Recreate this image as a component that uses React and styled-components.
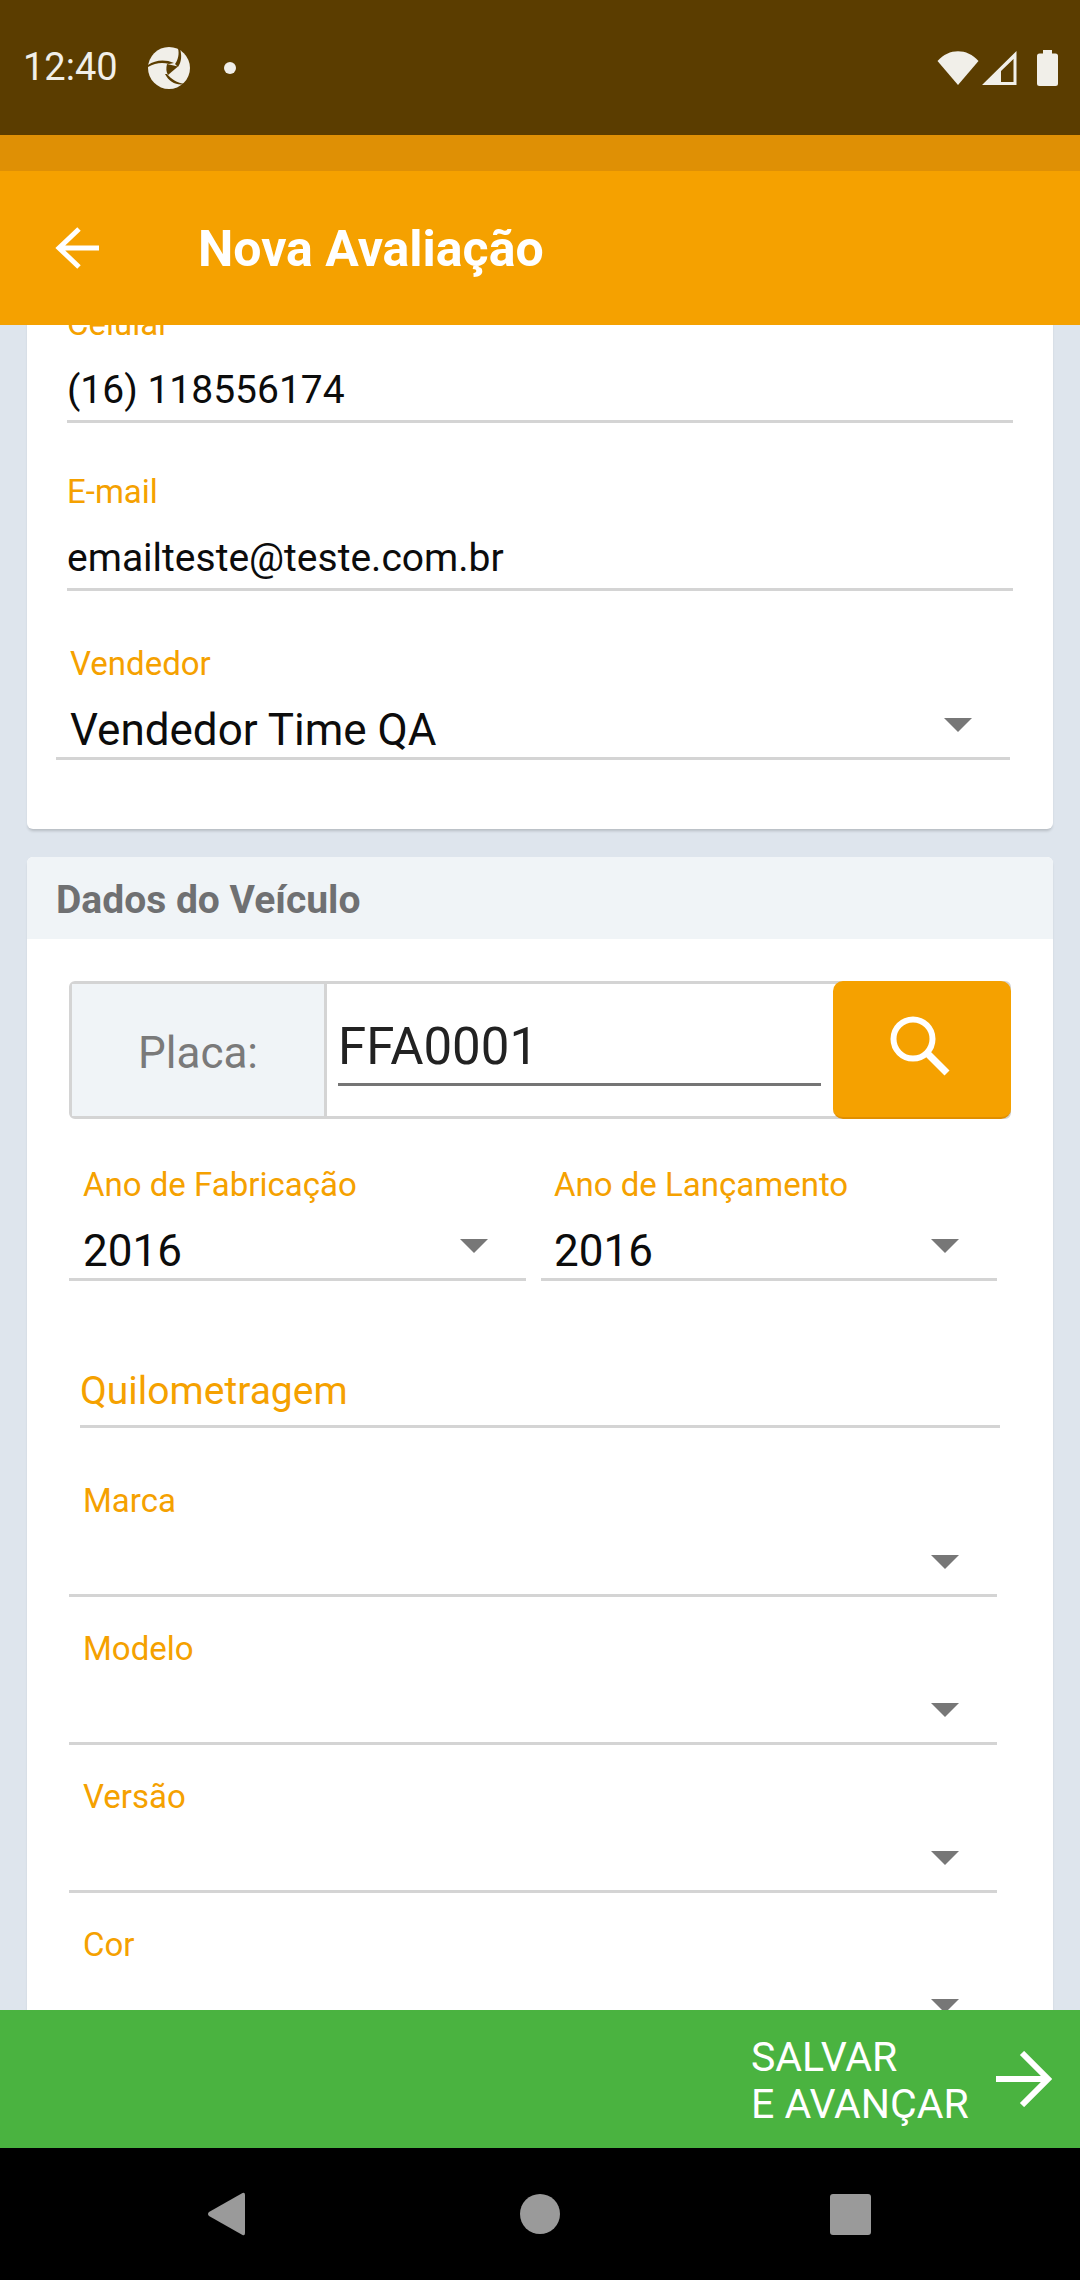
import React from "react";
import styled, { createGlobalStyle } from "styled-components";

const ORANGE = "#f5a100";
const LINE = "#d4d4d4";

const GlobalStyle = createGlobalStyle`
  html, body {
    margin: 0;
    padding: 0;
    background: #000;
  }
  * {
    box-sizing: border-box;
  }
`;

const Screen = styled.div`
  display: flex;
  flex-direction: column;
  width: 1080px;
  height: 2280px;
  overflow: hidden;
  background: #dee5ed;
  font-family: Roboto, "Noto Sans", sans-serif;
`;

const StatusBar = styled.div`
  flex: none;
  display: flex;
  align-items: center;
  height: 135px;
  padding: 0 22px 0 23px;
  background: #5b3d00;
  color: #f1efe9;
`;

const Clock = styled.span`
  width: 124px;
  font-size: 38px;
  line-height: 135px;
`;

const Spacer = styled.div`
  flex: 1;
`;

const Dot = styled.span`
  width: 12px;
  height: 12px;
  margin-left: 33px;
  border-radius: 50%;
  background: #f1efe9;
`;

const StatusIcons = styled.div`
  display: flex;
  align-items: center;
`;

const AppStrip = styled.div`
  flex: none;
  height: 36px;
  background: #df9005;
`;

const AppBar = styled.header`
  flex: none;
  position: relative;
  z-index: 2;
  display: flex;
  align-items: center;
  height: 154px;
  padding-left: 53px;
  background: ${ORANGE};
  color: #fff;
`;

const Title = styled.h1`
  margin: 2px 0 0 99px;
  font-size: 50px;
  font-weight: 700;
`;

const Content = styled.main`
  flex: 1;
  min-height: 0;
  overflow: hidden;
  padding: 0 27px;
`;

const Card = styled.section`
  margin-top: ${(p) => p.$top}px;
  padding-bottom: ${(p) => p.$bottom || 0}px;
  border-radius: 6px;
  background: #fff;
  box-shadow: 0 3px 3px -1px rgba(0, 0, 0, 0.18);
`;

const Field = styled.div`
  margin: ${(p) => p.$top || 0}px 40px 0;
  border-bottom: 3px solid ${LINE};
`;

const Label = styled.div`
  font-size: 33px;
  line-height: 44px;
  color: ${ORANGE};
  padding-left: ${(p) => p.$indent || 0}px;
`;

const Value = styled.div`
  margin-top: 15px;
  padding-bottom: 1px;
  font-size: 39px;
  line-height: 58px;
  color: #0c0c0c;
`;

const SelectBox = styled.div`
  width: ${(p) => p.$width}px;
  margin: ${(p) => p.$top || 0}px 0 0 ${(p) => p.$left || 0}px;
  border-bottom: 3px solid ${LINE};
`;

const SelectRow = styled.div`
  display: flex;
  justify-content: space-between;
  align-items: flex-start;
  height: 54px;
  margin-top: 17px;
  padding: 0 38px 0 ${(p) => p.$indent}px;
  font-size: 44px;
  line-height: 54px;
  color: #0c0c0c;
`;

const Caret = styled.span`
  flex: none;
  width: 0;
  height: 0;
  margin-top: 15px;
  border-left: 14px solid transparent;
  border-right: 14px solid transparent;
  border-top: 14px solid #777;
`;

const SectionHeader = styled.h2`
  display: flex;
  align-items: center;
  height: 82px;
  margin: 0;
  padding: 4px 0 0 29px;
  border-radius: 6px 6px 0 0;
  background: #f0f4f7;
  color: #6f7072;
  font-size: 39px;
  font-weight: 700;
`;

const SectionBody = styled.div`
  padding: 42px 0 40px 42px;
`;

const PlateGroup = styled.div`
  display: flex;
  width: 942px;
  height: 138px;
  border: 3px solid ${LINE};
  border-radius: 6px;
`;

const PlateLabel = styled.div`
  display: flex;
  align-items: center;
  justify-content: center;
  width: 255px;
  padding-top: 6px;
  border-right: 3px solid ${LINE};
  background: #f0f4f7;
  color: #7a7a7a;
  font-size: 44px;
`;

const PlateCell = styled.div`
  flex: 1;
  padding: 33px 12px 0 11px;
`;

const PlateValue = styled.div`
  height: 69px;
  border-bottom: 3px solid #757575;
  color: #222;
  font-size: 51px;
  line-height: 60px;
`;

const SearchButton = styled.button`
  flex: none;
  display: flex;
  align-items: center;
  justify-content: center;
  width: 178px;
  margin: -3px -3px -3px 0;
  padding: 0 2px 4px 0;
  border: 0;
  border-bottom: 2px solid #e08f00;
  border-radius: 10px;
  background: ${ORANGE};
`;

const YearRow = styled.div`
  display: flex;
  gap: 15px;
`;

const Mileage = styled.div`
  width: 920px;
  margin: 81px 0 0 11px;
  padding-bottom: 5px;
  border-bottom: 3px solid ${LINE};
  color: ${ORANGE};
  font-size: 39px;
  line-height: 58px;
`;

const SaveBar = styled.div`
  flex: none;
  display: flex;
  justify-content: flex-end;
  align-items: center;
  height: 138px;
  padding-right: 28px;
  background: #4ab340;
  color: #fff;
`;

const SaveText = styled.div`
  width: 245px;
  padding-top: 4px;
  font-size: 41px;
  line-height: 47px;
`;

const NavBar = styled.nav`
  flex: none;
  display: flex;
  align-items: center;
  height: 132px;
  padding-left: 206px;
  background: #000;
`;

const Select = ({ label, value, width, top, left, indent = 14 }) => (
  <SelectBox $width={width} $top={top} $left={left}>
    <Label $indent={indent}>{label}</Label>
    <SelectRow $indent={indent}>
      <span>{value}</span>
      <Caret />
    </SelectRow>
  </SelectBox>
);

const Glyph = styled.svg`
  display: block;
  flex: none;
  margin-left: ${(p) => p.$left || 0}px;
`;

const StatusLogo = () => (
  <Glyph width="44" height="44" viewBox="0 0 44 44">
    <circle cx="22" cy="22" r="21" fill="#f1efe9" />
    <path d="M1 19 C8 14 18 13 27 17 L22 18 C15 16 8 17 1 21 Z" fill="#5b3d00" />
    <path d="M33 3 C35 9 34.5 16 31 21 L28 18 C31 14 32.5 8 31 2.5 Z" fill="#5b3d00" />
    <path d="M20 18 L31 20.5 L21 29 C19 26 19 22 20 18 Z" fill="#5b3d00" />
    <path d="M20 28 C24 33 30 37 38 38 C30 40 22 36 18 28 Z" fill="#5b3d00" />
  </Glyph>
);

const WifiIcon = () => (
  <Glyph width="42" height="36" viewBox="0 0 42 36">
    <path d="M0.5 11 C12 -2 30 -2 41.5 11 L21 35 Z" fill="#f1efe9" />
  </Glyph>
);

const SignalIcon = () => (
  <Glyph $left={3} width="35" height="36" viewBox="0 0 35 36">
    <path fillRule="evenodd" d="M0 35 L34.5 1 L34.5 35 Z M19 32 L31.5 32 L31.5 9 L19 21 Z" fill="#f1efe9" />
  </Glyph>
);

const BatteryIcon = () => (
  <Glyph $left={20} width="21" height="36" viewBox="0 0 21 36">
    <path d="M6 0 H15 V3.5 H18.5 A2.5 2.5 0 0 1 21 6 V33.5 A2.5 2.5 0 0 1 18.5 36 H2.5 A2.5 2.5 0 0 1 0 33.5 V6 A2.5 2.5 0 0 1 2.5 3.5 H6 Z" fill="#f1efe9" />
  </Glyph>
);

const BackIcon = () => (
  <Glyph width="46" height="46" viewBox="0 0 46 46">
    <path d="M46 23 H8 M26 4 L6 23 L26 42" fill="none" stroke="#fff" strokeWidth="5" />
  </Glyph>
);

const SearchIcon = () => (
  <Glyph width="64" height="64" viewBox="0 0 64 64">
    <circle cx="24" cy="24" r="19.5" fill="none" stroke="#fff" strokeWidth="6" />
    <path d="M38 38 L58 58" fill="none" stroke="#fff" strokeWidth="7" />
  </Glyph>
);

const ForwardIcon = () => (
  <Glyph width="56" height="56" viewBox="0 0 56 56">
    <path d="M0 28 H52 M26 2 L52 28 L26 54" fill="none" stroke="#fff" strokeWidth="6" />
  </Glyph>
);

const NavBack = () => (
  <Glyph width="40" height="46" viewBox="0 0 40 46">
    <path d="M36.5 2 L3 21 Q1 23 3 25 L36.5 44 Q39 45 39 42 V4 Q39 1 36.5 2 Z" fill="#9a9a9a" />
  </Glyph>
);

const NavHome = () => (
  <Glyph $left={274} width="40" height="40" viewBox="0 0 40 40">
    <circle cx="20" cy="20" r="20" fill="#9a9a9a" />
  </Glyph>
);

const NavRecent = () => (
  <Glyph $left={270} width="41" height="41" viewBox="0 0 41 41">
    <rect width="41" height="41" rx="3" fill="#9a9a9a" />
  </Glyph>
);

export default function App() {
  return (
    <Screen>
      <GlobalStyle />
      <StatusBar>
        <Clock>12:40</Clock>
        <StatusLogo />
        <Dot />
        <Spacer />
        <StatusIcons>
          <WifiIcon />
          <SignalIcon />
          <BatteryIcon />
        </StatusIcons>
      </StatusBar>
      <AppStrip />
      <AppBar>
        <BackIcon />
        <Title>Nova Avaliação</Title>
      </AppBar>
      <Content>
        <Card $top={-23} $bottom={69}>
          <Field>
            <Label>Celular</Label>
            <Value>(16) 118556174</Value>
          </Field>
          <Field $top={47}>
            <Label>E-mail</Label>
            <Value>emailteste@teste.com.br</Value>
          </Field>
          <Select label="Vendedor" value="Vendedor Time QA" width={954} top={51} left={29} />
        </Card>
        <Card $top={28}>
          <SectionHeader>Dados do Veículo</SectionHeader>
          <SectionBody>
            <PlateGroup>
              <PlateLabel>Placa:</PlateLabel>
              <PlateCell>
                <PlateValue>FFA0001</PlateValue>
              </PlateCell>
              <SearchButton aria-label="Buscar">
                <SearchIcon />
              </SearchButton>
            </PlateGroup>
            <YearRow>
              <Select label="Ano de Fabricação" value="2016" width={457} top={44} />
              <Select label="Ano de Lançamento" value="2016" width={456} top={44} indent={13} />
            </YearRow>
            <Mileage>Quilometragem</Mileage>
            <Select label="Marca" width={928} top={51} />
            <Select label="Modelo" width={928} top={30} />
            <Select label="Versão" width={928} top={30} />
            <Select label="Cor" width={928} top={30} />
          </SectionBody>
        </Card>
      </Content>
      <SaveBar>
        <SaveText>
          SALVAR
          <br />E AVANÇAR
        </SaveText>
        <ForwardIcon />
      </SaveBar>
      <NavBar>
        <NavBack />
        <NavHome />
        <NavRecent />
      </NavBar>
    </Screen>
  );
}
